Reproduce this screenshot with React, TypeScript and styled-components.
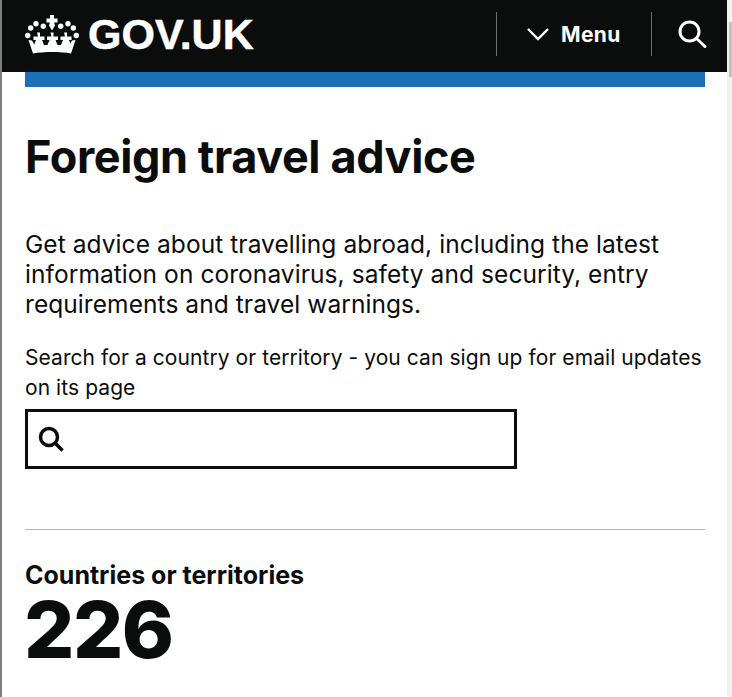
import styled, { createGlobalStyle } from "styled-components";

const GlobalStyle = createGlobalStyle`
  html, body {
    margin: 0;
    padding: 0;
    background: #fff;
    overflow: hidden;
  }
  body {
    font-family: Inter, "Noto Sans", sans-serif;
    color: #0b0c0c;
  }
`;

function Fleur({ x }: { x: number }) {
  return (
    <path
      transform={`translate(${x} 0)`}
      d="M-1.500 17.500h3v4h4.500v3.500h-2.500l2 5h-10l2-5h-2.500v-3.500h4.500z"
    />
  );
}

function Crown() {
  return (
    <svg width="54" height="39" viewBox="0 0 54 39" fill="#fff">
      <path d="M25 0h4v3.500h3.500v4H29l1 3-3 5-3-5 1-3h-3.500v-4H25z" />
      <circle cx="2.700" cy="20.500" r="2.700" />
      <circle cx="5.700" cy="13" r="2.700" />
      <circle cx="11" cy="8.700" r="2.700" />
      <circle cx="18.300" cy="11.300" r="2.700" />
      <circle cx="35.700" cy="11.300" r="2.700" />
      <circle cx="43" cy="8.700" r="2.700" />
      <circle cx="48.300" cy="13" r="2.700" />
      <circle cx="51.300" cy="20.500" r="2.700" />
      <Fleur x={13.500} />
      <Fleur x={27} />
      <Fleur x={40.500} />
      <path d="M3.500 25l3.500 .5 2.500 4.500h35l2.500-4.500 3.500-.5-4.500 13.500c-9-2-28-2-38 0z" />
    </svg>
  );
}

function App() {
  return (
    <Page>
      <GlobalStyle />
      <Content>
        <Header>
          <Logo>
            <Crown />
            <LogoText>GOV.UK</LogoText>
          </Logo>
          <Nav>
            <MenuButton>
              <svg width="22" height="14" viewBox="0 0 22 14" fill="none" stroke="#fff" strokeWidth="2.400">
                <path d="M1 2l10 10L21 2" />
              </svg>
              Menu
            </MenuButton>
            <SearchButton>
              <svg width="29" height="28" viewBox="0 0 29 28" fill="none" stroke="#fff" strokeWidth="3">
                <circle cx="11.500" cy="11.500" r="9.500" />
                <path d="M18.500 18.500L27 26.500" strokeLinecap="round" />
              </svg>
            </SearchButton>
          </Nav>
        </Header>
        <Main>
          <BlueBar />
          <Title>Foreign travel advice</Title>
          <Lead>
            Get advice about travelling abroad, including the latest information on coronavirus,
            safety and security, entry requirements and travel warnings.
          </Lead>
          <SearchLabel htmlFor="country">
            Search for a country or territory - you can sign up for email updates on its page
          </SearchLabel>
          <SearchBox>
            <svg width="28" height="28" viewBox="0 0 28 28" fill="none" stroke="#0b0c0c" strokeWidth="3.500">
              <circle cx="12" cy="12" r="8.500" />
              <path d="M18.500 18.500l7 7" />
            </svg>
            <SearchInput id="country" type="text" />
          </SearchBox>
          <Divider />
          <CountLabel>Countries or territories</CountLabel>
          <Count>226</Count>
        </Main>
      </Content>
      <ScrollTrack>
        <ScrollThumb />
      </ScrollTrack>
    </Page>
  );
}

const Page = styled.div`
  display: flex;
  height: 697px;
  overflow: hidden;
  border-left: 2px solid #7f7f7f;
  box-sizing: border-box;
`;

const Content = styled.div`
  flex: 1;
  min-width: 0;
`;

const Header = styled.header`
  display: flex;
  align-items: center;
  justify-content: space-between;
  box-sizing: border-box;
  height: 72px;
  background: #0b0c0c;
  padding: 0 0 4px 23px;
`;

const Logo = styled.div`
  display: flex;
  align-items: center;
  gap: 9px;
`;

const LogoText = styled.span`
  font-family: "Liberation Sans", sans-serif;
  font-weight: 700;
  font-size: 43px;
  color: #fff;
  -webkit-text-stroke: 0.5px #fff;
`;

const Nav = styled.nav`
  display: flex;
  align-items: center;
  height: 44px;
`;

const MenuButton = styled.div`
  display: flex;
  align-items: center;
  gap: 12px;
  height: 44px;
  box-sizing: border-box;
  width: 156px;
  padding-left: 30px;
  border-left: 1px solid #6f7072;
  border-right: 1px solid #6f7072;
  color: #fff;
  font-weight: 700;
  font-size: 21px;
  letter-spacing: 0.4px;
`;

const SearchButton = styled.div`
  display: flex;
  align-items: center;
  width: 75px;
  padding-left: 26px;
  box-sizing: border-box;
`;

const Main = styled.main`
  padding: 0 22px 0 23px;
`;

const BlueBar = styled.div`
  height: 15px;
  background: #1d70b8;
`;

const Title = styled.h1`
  margin: 43px 0 0;
  font-size: 45px;
  line-height: 54px;
  font-weight: 700;
  letter-spacing: -0.4px;
`;

const Lead = styled.p`
  margin: 45px 0 0;
  font-size: 24.500px;
  line-height: 30px;
  letter-spacing: 0.07px;
`;

const SearchLabel = styled.label`
  display: block;
  margin-top: 24px;
  font-size: 21px;
  line-height: 30px;
  letter-spacing: 0.07px;
`;

const SearchBox = styled.div`
  display: flex;
  align-items: center;
  gap: 8px;
  box-sizing: border-box;
  width: 492px;
  height: 60px;
  border: 3px solid #0b0c0c;
  padding-left: 9px;
  margin-top: 6px;
`;

const SearchInput = styled.input`
  flex: 1;
  border: 0;
  outline: 0;
  background: transparent;
`;

const Divider = styled.hr`
  margin: 60px 0 0;
  border: 0;
  border-top: 1px solid #b1b4b6;
`;

const CountLabel = styled.div`
  margin-top: 30px;
  font-size: 25px;
  line-height: 30px;
  font-weight: 700;
`;

const Count = styled.div`
  margin-left: -1px;
  font-size: 79px;
  line-height: 79px;
  font-weight: 800;
  letter-spacing: -1.500px;
`;

const ScrollTrack = styled.div`
  flex: none;
  width: 5px;
  padding: 22px 0 0 2px;
  box-sizing: border-box;
  background: #f1f1f1;
`;

const ScrollThumb = styled.div`
  height: 55px;
  background: #c1c1c1;
`;

export default App;
